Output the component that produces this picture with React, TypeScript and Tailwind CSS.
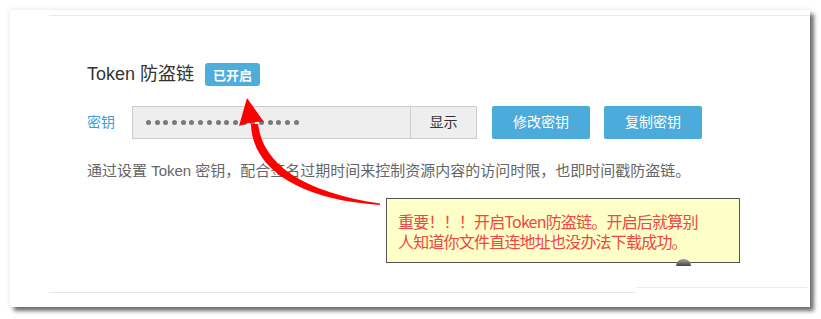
const dots = Array.from({ length: 18 });

export default function App() {
  return (
    <div className="relative w-[821px] h-[319px] bg-white p-[10px] font-['Liberation_Sans','Noto_Sans_CJK_SC',sans-serif]">
      {/* screenshot frame */}
      <div className="w-[800px] h-[297px] bg-white flex flex-col pl-[39px] pt-[5px] shadow-[4px_4px_4px_rgba(0,0,0,0.55),0_0_6px_rgba(0,0,0,0.1)]">
        <div className="flex-1 flex flex-col border-t border-[#e8e8e8]">
          <div className="pl-[38px] pt-[46px]">
            {/* title */}
            <div className="flex items-center h-[24px]">
              <span className="text-[18px] leading-[24px] text-[#333]">Token 防盗链</span>
              <span className="ml-[11px] h-[23px] px-[8px] rounded-[3px] bg-[#4faddb] text-white text-[13px] font-bold leading-[23px] font-['Noto_Sans_CJK_SC',sans-serif]">
                已开启
              </span>
            </div>

            {/* key row */}
            <div className="mt-[20px] flex items-center h-[33px]">
              <span className="w-[45px] text-[14px] text-[#3a9fd6]">密钥</span>
              <div className="w-[279px] h-[33px] border border-[#cccccc] bg-[#eeeeee] pl-[13px] flex items-center gap-[3.7px]">
                {dots.map((_, i) => (
                  <div key={i} className="w-[5px] h-[5px] rounded-full bg-[#7a7a7a]" />
                ))}
              </div>
              <button className="w-[66px] h-[33px] border border-l-0 border-[#cccccc] bg-[#eeeeee] text-[14px] text-[#333]">
                显示
              </button>
              <button className="ml-[15px] w-[98px] h-[33px] rounded-[2px] bg-[#4babdb] text-white text-[14px]">
                修改密钥
              </button>
              <button className="ml-[14px] w-[98px] h-[33px] rounded-[2px] bg-[#4babdb] text-white text-[14px]">
                复制密钥
              </button>
            </div>

            {/* description */}
            <p className="mt-[22px] text-[15px] leading-[20px] text-[#666]">
              通过设置 Token 密钥，配合签名过期时间来控制资源内容的访问时限，也即时间戳防盗链。
            </p>
          </div>

          <div className="mt-auto mb-[14px] flex items-end">
            <div className="w-[587px] border-b border-[#e6e6ec]" />
            <div className="w-[171px] mb-[5px] border-b border-[#ececec]" />
          </div>
        </div>
      </div>

      {/* annotation note */}
      <div className="absolute left-[386px] top-[198px] w-[354px] h-[65px] border border-[#555] bg-[#ffffc8] pl-[11px] pt-[12px] text-[16px] leading-[20px] tracking-[-0.8px] text-[#f24545] whitespace-nowrap font-['Noto_Sans_CJK_SC',sans-serif]">
        <div>重要！！！开启Token防盗链。开启后就算别</div>
        <div>人知道你文件直连地址也没办法下载成功。</div>
      </div>
      <div className="absolute left-[676px] top-[259px] w-[15px] h-[7px] rounded-t-full bg-gradient-to-b from-[#aaa] to-[#444]" />

      {/* red arrow */}
      <svg className="absolute left-0 top-0 pointer-events-none" width="821" height="319" viewBox="0 0 821 319">
        <path d="M251,124 C252,168 298,200 380,205 L380,203.5 C302,192 263,164 258,124 Z" fill="#ff0000" />
        <path d="M247,98 L239,126 Q250,121 264,122 Z" fill="#ff0000" />
      </svg>
    </div>
  );
}
